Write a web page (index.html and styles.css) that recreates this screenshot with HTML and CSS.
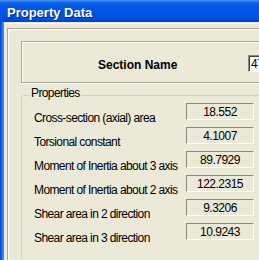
FILE: index.html
```html
<!DOCTYPE html>
<html>
<head>
<meta charset="utf-8">
<link rel="stylesheet" href="styles.css">
</head>
<body>
<div class="window">
  <div class="titlebar"><span class="title">Property Data</span></div>
  <div class="client">
    <div class="frame-left"></div>
    <div class="content">
      <div class="panel">
        <div class="name-box">
          <span class="name-label">Section Name</span>
          <span class="name-field">47</span>
        </div>
        <div class="group">
          <span class="legend">Properties</span>
          <div class="rows">
            <span class="label">Cross-section (axial) area</span><span class="value">18.552</span>
            <span class="label">Torsional constant</span><span class="value">4.1007</span>
            <span class="label">Moment of Inertia about 3 axis</span><span class="value">89.7929</span>
            <span class="label">Moment of Inertia about 2 axis</span><span class="value">122.2315</span>
            <span class="label">Shear area in 2 direction</span><span class="value">9.3206</span>
            <span class="label">Shear area in 3 direction</span><span class="value">10.9243</span>
          </div>
        </div>
      </div>
    </div>
  </div>
</div>
</body>
</html>
```

FILE: styles.css
```css
html, body {
  margin: 0;
  padding: 0;
}
body {
  background: #ECE9D8;
  font-family: "Liberation Sans", Arial, sans-serif;
  width: 259px;
  height: 260px;
  overflow: hidden;
}
.window {
  width: 340px;
  height: 260px;
  display: flex;
  flex-direction: column;
}
.titlebar {
  height: 22px;
  box-sizing: border-box;
  padding: 5px 0 0 7px;
  background: linear-gradient(#4a95f7 0, #1a6cec 2px, #0459e6 5px, #0055e5 50%, #0050df 80%, #0044cc 100%);
  flex-shrink: 0;
}
.title {
  display: block;
  color: #fff;
  font-weight: bold;
  font-size: 13px;
  line-height: 15px;
  text-shadow: 1px 1px 0 #0a2a9a;
}
.client {
  flex: 1;
  display: flex;
}
.frame-left {
  width: 4px;
  flex-shrink: 0;
  background: linear-gradient(90deg, #0838c8 0, #0a55e0 1px, #166ef0 2px, #3a88f2 3px);
}
.content {
  flex: 1;
  margin-top: 1px;
  border-top: 1px solid #fbfaf5;
  padding: 4px 0 0 3px;
}
.panel {
  width: 320px;
  height: 260px;
  border: 1px solid #aca899;
  box-shadow: inset 1px 1px 0 #fff;
  padding: 12px 0 0 13px;
}
.name-box {
  height: 42px;
  width: 300px;
  box-sizing: border-box;
  border: 1px solid #aca899;
  box-shadow: inset 1px 1px 0 #fff, 1px 1px 0 #fff;
  display: flex;
  align-items: flex-start;
}
.name-label {
  width: 226px;
  box-sizing: border-box;
  padding-left: 76px;
  margin-top: 16px;
  font-weight: bold;
  font-size: 12px;
  line-height: 14px;
  color: #000;
  white-space: nowrap;
}
.name-field {
  margin-top: 13px;
  width: 40px;
  height: 17px;
  box-sizing: border-box;
  border: 1px solid;
  border-color: #8a8880 #fff #fff #8a8880;
  box-shadow: inset 1px 1px 0 #404040;
  background: #fbfbf8;
  font-size: 12px;
  line-height: 14px;
  padding: 1px 0 0 2px;
  letter-spacing: -0.3px;
}
.group {
  position: relative;
  margin-top: 12px;
  width: 300px;
  height: 200px;
  border: 1px solid #d0d0bf;
  border-radius: 3px;
  padding: 7px 0 0 12px;
}
.legend {
  position: absolute;
  top: -10px;
  left: 7px;
  padding: 0 2px;
  background: #ECE9D8;
  font-size: 12px;
  line-height: 14px;
  letter-spacing: -0.6px;
  color: #000;
}
.rows {
  display: grid;
  grid-template-columns: 152px 68px;
  grid-auto-rows: 24px;
}
.label {
  padding-top: 8px;
  font-size: 12px;
  line-height: 14px;
  letter-spacing: -0.6px;
  white-space: nowrap;
  color: #000;
}
.value {
  height: 17px;
  box-sizing: border-box;
  border: 1px solid;
  border-color: #8a8880 #fff #fff #8a8880;
  padding-top: 1px;
  font-size: 12px;
  line-height: 14px;
  letter-spacing: -0.5px;
  text-align: center;
  color: #000;
}
```
